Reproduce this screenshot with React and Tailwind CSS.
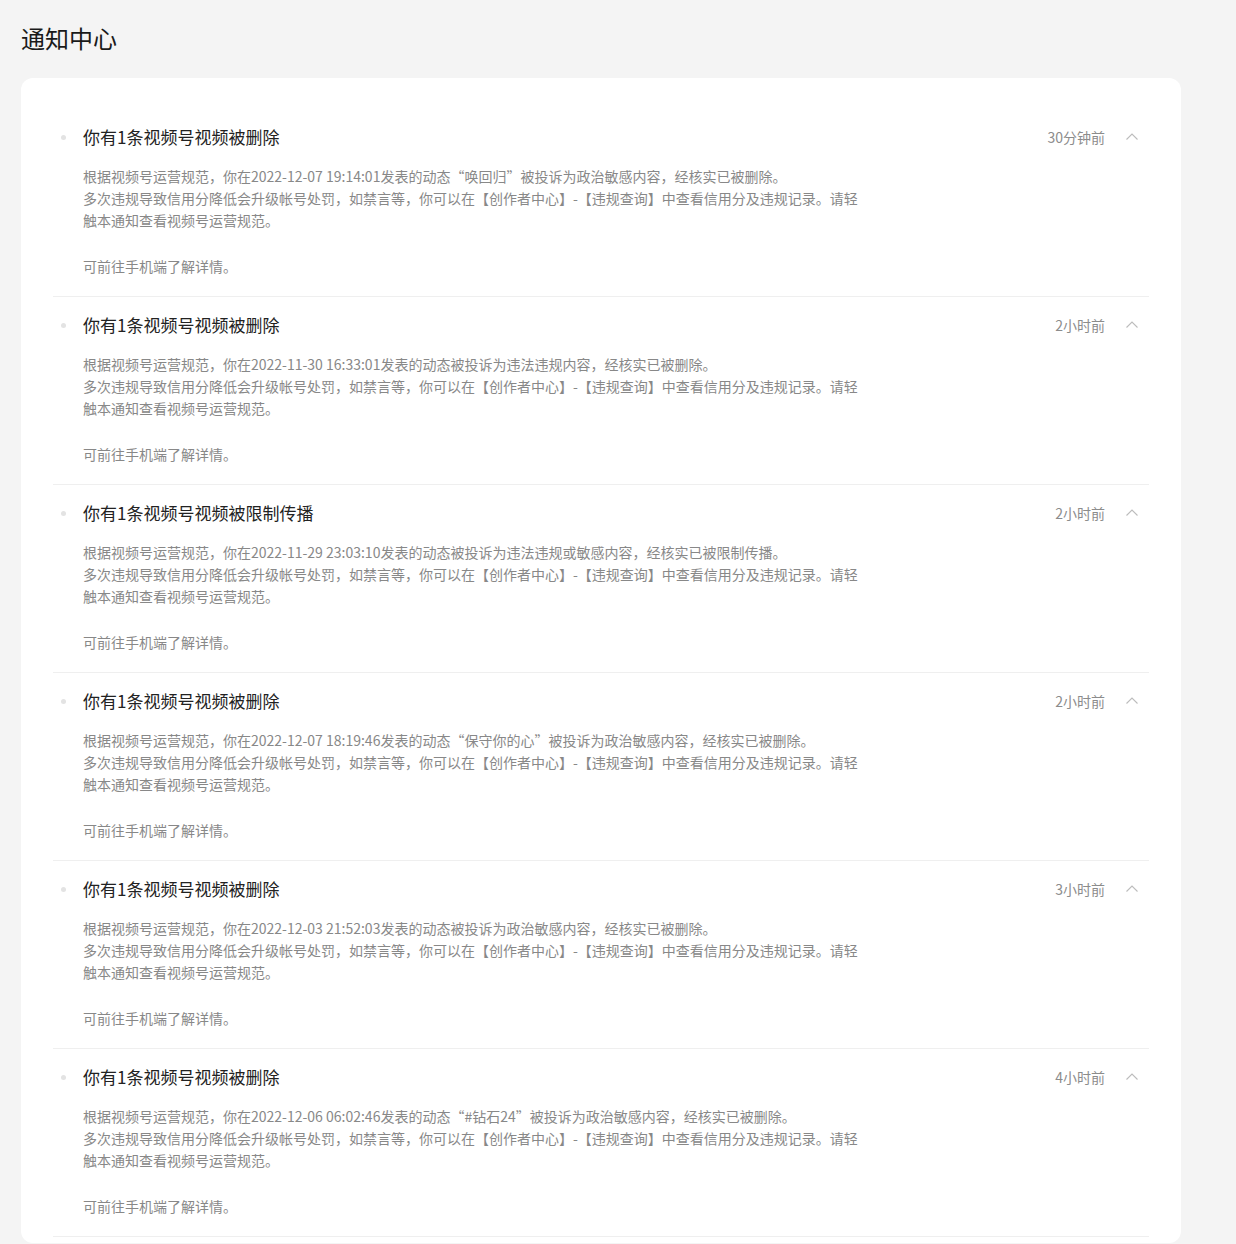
const notices = [
  {
    title: '你有1条视频号视频被删除',
    time: '30分钟前',
    text: '根据视频号运营规范，你在2022-12-07 19:14:01发表的动态“唤回归”被投诉为政治敏感内容，经核实已被删除。',
  },
  {
    title: '你有1条视频号视频被删除',
    time: '2小时前',
    text: '根据视频号运营规范，你在2022-11-30 16:33:01发表的动态被投诉为违法违规内容，经核实已被删除。',
  },
  {
    title: '你有1条视频号视频被限制传播',
    time: '2小时前',
    text: '根据视频号运营规范，你在2022-11-29 23:03:10发表的动态被投诉为违法违规或敏感内容，经核实已被限制传播。',
  },
  {
    title: '你有1条视频号视频被删除',
    time: '2小时前',
    text: '根据视频号运营规范，你在2022-12-07 18:19:46发表的动态“保守你的心”被投诉为政治敏感内容，经核实已被删除。',
  },
  {
    title: '你有1条视频号视频被删除',
    time: '3小时前',
    text: '根据视频号运营规范，你在2022-12-03 21:52:03发表的动态被投诉为政治敏感内容，经核实已被删除。',
  },
  {
    title: '你有1条视频号视频被删除',
    time: '4小时前',
    text: '根据视频号运营规范，你在2022-12-06 06:02:46发表的动态“#钻石24”被投诉为政治敏感内容，经核实已被删除。',
  },
]

const ChevronUp = () => (
  <svg width="16" height="16" viewBox="0 0 16 16" fill="none">
    <path d="M2.5 10.5L8 5L13.5 10.5" stroke="#bcbcbc" strokeWidth="1.1" />
  </svg>
)

const NoticeItem = ({ notice }) => (
  <div className="pt-4 pb-[19px] border-b border-[#efefef]">
    <div className="flex items-center h-6">
      <span className="w-[5px] h-[5px] rounded-full bg-[#e3e3e3] ml-2" />
      <h3 className="flex-1 ml-[17px] text-[17px] leading-6 text-[#222222]">
        {notice.title}
      </h3>
      <span className="text-[14px] text-[#8c8c8c]">{notice.time}</span>
      <span className="ml-[19px] mr-[9px] flex items-center">
        <ChevronUp />
      </span>
    </div>

    <div className="pl-[30px] mt-4 text-[14px] leading-[22px] text-[#888888]">
      <p className="max-w-[780px]">
        {notice.text}
        <br />
        多次违规导致信用分降低会升级帐号处罚，如禁言等，你可以在【创作者中心】-【违规查询】中查看信用分及违规记录。请轻触本通知查看视频号运营规范。
      </p>
      <p className="mt-6">可前往手机端了解详情。</p>
    </div>
  </div>
)

const App = () => {
  return (
    <div
      className="min-h-screen bg-[#f4f4f4] px-[21px]"
      style={{ fontFamily: '"Noto Sans CJK SC", "Noto Sans", sans-serif' }}
    >
      <h1 className="pt-[22px] text-[24px] leading-8 text-[#1a1a1a]">
        通知中心
      </h1>

      <div className="mt-6 w-[1160px] bg-white rounded-xl px-8 pt-[31px] pb-[6px]">
        {notices.map((notice, i) => (
          <NoticeItem key={i} notice={notice} />
        ))}
      </div>
    </div>
  )
}

export default App
